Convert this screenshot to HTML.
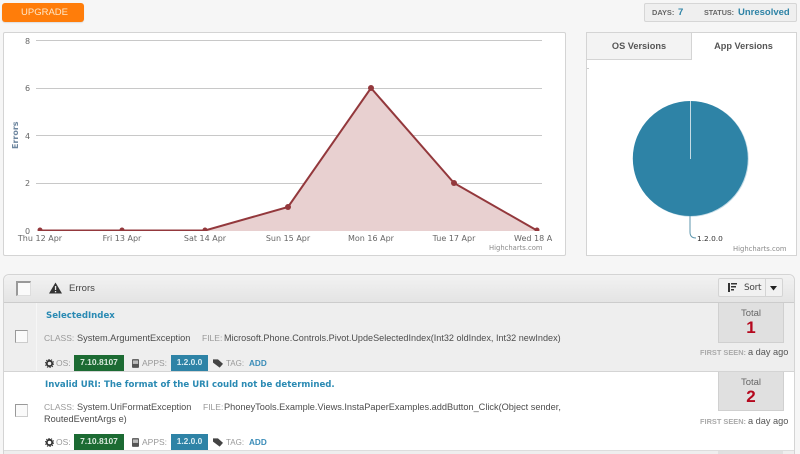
<!DOCTYPE html>
<html>
<head>
<meta charset="utf-8">
<style>
html,body{margin:0;padding:0;width:800px;height:454px;overflow:hidden}
#w{position:absolute;left:0;top:0;width:800px;height:454px;overflow:hidden;background:#f6f6f6;font-family:"Liberation Sans",sans-serif}
.a{position:absolute}
.t{position:absolute;white-space:nowrap}
.upg{left:2px;top:3px;width:82px;height:19px;background:#ff7d0a;border-radius:3px;color:#fde6c8;font:9.5px/19px "Liberation Sans",sans-serif;text-indent:19px;box-shadow:0 1px 1px #ddd}
.stat{left:644px;top:3px;width:151px;height:17px;background:#efefef;border:1px solid #d6d6d6;border-radius:2px}
.chart{left:3px;top:32px;width:561px;height:222px;background:#fff;border:1px solid #d4d4d4;border-radius:2px}
.pie{left:586px;top:32px;width:209px;height:222px;background:#fff;border:1px solid #d4d4d4}
.tab1{left:586px;top:32px;width:104px;height:26px;background:#f3f3f3;border:1px solid #d4d4d4;color:#555;font:bold 9.2px/26px "Liberation Sans",sans-serif;text-align:center}
.tab2{left:692px;top:33px;width:103px;height:26px;color:#555;font:bold 9.2px/26px "Liberation Sans",sans-serif;text-align:center}
.panel{left:3px;top:274px;width:790px;height:178px;background:#fff;border:1px solid #d4d4d4;border-radius:6px 6px 0 0}
.head{left:4px;top:275px;width:790px;height:27px;background:linear-gradient(#f2f2f2,#e4e4e4);border-bottom:1px solid #ccc;border-radius:6px 6px 0 0}
.row1{left:4px;top:303px;width:790px;height:68px;background:#eeeeee;border-bottom:1px solid #d4d4d4}
.row3{left:4px;top:450px;width:790px;height:4px;background:#eee;border-top:1px solid #ddd}
.cb{position:absolute;width:11px;height:11px;background:#fafafa;border:1px solid #999;border-right-color:#ccc;border-bottom-color:#ccc}
.lbl{color:#999;font-size:8.5px;line-height:13px}
.val{color:#4d4d4d;font-size:9.2px;line-height:13px}
.os{position:absolute;left:74px;width:50px;height:16px;background:#1c6b33;color:#d8e8dc;font:bold 8.5px/15px "Liberation Sans",sans-serif;text-align:center}
.app{position:absolute;left:171px;width:37px;height:16px;background:#2e83a6;color:#d8ebf2;font:bold 8.4px/15px "Liberation Sans",sans-serif;text-align:center}
.title{color:#2a8ab3;font:bold 8.6px/12px "DejaVu Sans",sans-serif}
.add{color:#3a8cb8;font:bold 8.2px/13px "Liberation Sans",sans-serif}
.total{position:absolute;left:718px;width:64px;background:#e0e0e0;border:1px solid #d0d0d0;border-top:none;text-align:center;color:#666;font-size:9.5px;line-height:12px}
.total b{display:block;color:#b5081e;font-size:17px;line-height:15px}
.fs{color:#aaa;font:bold 7.4px/13px "Liberation Sans",sans-serif}
.ago{color:#555;font-size:9.2px;line-height:13px}
</style>
</head>
<body>
<div id="w">
<div class="a upg">UPGRADE</div>
<div class="a stat"></div>
<div class="t" style="left:652px;top:6px;font:bold 7.4px/13px 'Liberation Sans',sans-serif;color:#666">DAYS:</div>
<div class="t" style="left:678px;top:6px;font:bold 9.5px/13px 'Liberation Sans',sans-serif;color:#2e83a6">7</div>
<div class="t" style="left:704px;top:6px;font:bold 7.2px/13px 'Liberation Sans',sans-serif;color:#666">STATUS:</div>
<div class="t" style="left:738px;top:6px;font:bold 9.5px/13px 'Liberation Sans',sans-serif;color:#2e83a6">Unresolved</div>

<div class="a chart"></div>
<svg class="a" style="left:0;top:0" width="570" height="260" viewBox="0 0 570 260">
<defs><clipPath id="c"><rect x="0" y="0" width="570" height="231"/></clipPath></defs>
<g stroke="#c8c8c8" stroke-width="1">
<line x1="36" y1="40.5" x2="542" y2="40.5"/>
<line x1="36" y1="88.5" x2="542" y2="88.5"/>
<line x1="36" y1="135.5" x2="542" y2="135.5"/>
<line x1="36" y1="183.5" x2="542" y2="183.5"/>
</g>
<g clip-path="url(#c)">
<polygon points="40,231 122,231 205,231 288,207 371,88 454,183 537,231" fill="#e8d0d0"/>
<polyline points="40,230.5 122,230.5 205,230.5 288,207 371,88 454,183 537,230.500" fill="none" stroke="#93383c" stroke-width="2"/>
<g fill="#93383c">
<circle cx="40" cy="230" r="2.5"/><circle cx="122" cy="230" r="2.5"/><circle cx="205" cy="230" r="2.5"/>
<circle cx="288" cy="207" r="3"/><circle cx="371" cy="88" r="3"/><circle cx="454" cy="183" r="3"/><circle cx="537" cy="230" r="2.5"/>
</g>
</g>
<g font-family="DejaVu Sans,sans-serif" font-size="8" fill="#666">
<text x="25" y="44">8</text><text x="25" y="91">6</text><text x="25" y="139">4</text><text x="25" y="186">2</text><text x="25" y="234">0</text>
<text x="40" y="241" text-anchor="middle">Thu 12 Apr</text>
<text x="122" y="241" text-anchor="middle">Fri 13 Apr</text>
<text x="205" y="241" text-anchor="middle">Sat 14 Apr</text>
<text x="288" y="241" text-anchor="middle">Sun 15 Apr</text>
<text x="371" y="241" text-anchor="middle">Mon 16 Apr</text>
<text x="454" y="241" text-anchor="middle">Tue 17 Apr</text>
<text x="514" y="241">Wed 18 A</text>
</g>
<text x="489" y="250" font-family="DejaVu Sans,sans-serif" font-size="6.8" fill="#8a8a8a">Highcharts.com</text>
<text transform="translate(18,149) rotate(-90)" font-family="DejaVu Sans,sans-serif" font-size="8" font-weight="bold" fill="#6d869f">Errors</text>
</svg>

<div class="a pie"></div>
<div class="a tab1">OS Versions</div>
<div class="a tab2">App Versions</div>
<svg class="a" style="left:586px;top:60px" width="214" height="200" viewBox="586 60 214 200">
<rect x="587" y="68" width="2" height="1" fill="#ccc"/>
<circle cx="691" cy="159" r="57.700" fill="#c3dbe6"/>
<circle cx="690.300" cy="158.500" r="57.500" fill="#2e83a6"/>
<line x1="690.500" y1="101" x2="690.500" y2="159" stroke="#c5dbe4" stroke-width="1"/>
<path d="M690 216V232Q690 238 696 238" fill="none" stroke="#5d96ad" stroke-width="1"/>
<text x="697" y="241" font-family="DejaVu Sans,sans-serif" font-size="7.400" fill="#333">1.2.0.0</text>
<text x="733" y="251" font-family="DejaVu Sans,sans-serif" font-size="6.800" fill="#8a8a8a">Highcharts.com</text>
</svg>

<div class="a panel"></div>
<div class="a head"></div>
<div class="a" style="left:16px;top:281px;width:12px;height:12px;background:#fafafa;border-top:2px solid #999;border-left:2px solid #999;border-right:1px solid #ddd;border-bottom:1px solid #ddd"></div>
<svg class="a" style="left:49px;top:282px" width="14" height="12" viewBox="0 0 14 12"><path d="M6.500 0.500L13 11.500H0Z" fill="#333"/><rect x="5.900" y="4" width="1.300" height="4" fill="#eee"/><rect x="5.900" y="9" width="1.300" height="1.300" fill="#eee"/></svg>
<div class="t" style="left:69px;top:282px;font:9.500px/13px 'Liberation Sans',sans-serif;color:#444">Errors</div>
<div class="a" style="left:718px;top:278px;width:63px;height:17px;background:#f1f1f1;border:1px solid #d4d4d4;border-radius:2px"></div>
<div class="a" style="left:765px;top:279px;width:1px;height:17px;background:#d4d4d4"></div>
<svg class="a" style="left:728px;top:283px" width="10" height="9" viewBox="0 0 10 9"><path d="M0 0h2v9H0zM3 0h6v1.500H3zM3 3h5v1.500H3zM3 6h3v1.500H3z" fill="#333"/></svg>
<div class="t" style="left:744px;top:282px;font:9px/13px 'DejaVu Sans',sans-serif;color:#444;letter-spacing:-.3px">Sort</div>
<svg class="a" style="left:770px;top:286px" width="8" height="5"><path d="M0 0H7L3.500 4.500Z" fill="#222"/></svg>

<div class="a row1"></div>
<div class="a" style="left:36px;top:303px;width:1px;height:68px;background:#f6f6f6"></div>
<div class="a row3"></div>
<div class="a" style="left:718px;top:451px;width:65px;height:3px;background:#e0e0e0"></div>

<div class="cb" style="left:15px;top:330px"></div>
<div class="t title" style="left:46px;top:310px">SelectedIndex</div>
<div class="t lbl" style="left:44px;top:332px">CLASS:</div>
<div class="t val" style="left:77px;top:332px">System.ArgumentException</div>
<div class="t lbl" style="left:202px;top:332px">FILE:</div>
<div class="t val" style="left:224px;top:332px;font-size:9.100px">Microsoft.Phone.Controls.Pivot.UpdeSelectedIndex(Int32 oldIndex, Int32 newIndex)</div>
<div class="os" style="top:355px">7.10.8107</div>
<div class="app" style="top:355px">1.2.0.0</div>
<svg class="a" style="left:45px;top:359px" width="9" height="9" viewBox="0 0 10 10"><circle cx="5" cy="5" r="3" fill="none" stroke="#333" stroke-width="2"/><circle cx="5" cy="5" r="4.600" fill="none" stroke="#333" stroke-width="1" stroke-dasharray="1.500 1.400"/></svg>
<div class="t lbl" style="left:56px;top:357px">OS:</div>
<svg class="a" style="left:132px;top:359px" width="7" height="9" viewBox="0 0 8 10"><path d="M1 0h6a1 1 0 0 1 1 1v8a1 1 0 0 1-1 1H1a1 1 0 0 1-1-1V1a1 1 0 0 1 1-1z" fill="#555"/><rect x="1" y="1.500" width="6" height="4" fill="#bbb"/></svg>
<div class="t lbl" style="left:142px;top:357px">APPS:</div>
<svg class="a" style="left:213px;top:359px" width="10" height="9" viewBox="0 0 12 10"><path d="M0 0H6L12 5.500L8 10L0 4Z" fill="#444"/></svg>
<div class="t lbl" style="left:226px;top:357px;font-size:8px">TAG:</div>
<div class="t add" style="left:249px;top:357px">ADD</div>
<div class="total" style="top:303px;height:39px"><div style="padding-top:5px">Total</div><b>1</b></div>
<div class="t fs" style="left:700px;top:346px">FIRST SEEN:</div>
<div class="t ago" style="left:748px;top:346px">a day ago</div>

<div class="cb" style="left:15px;top:404px"></div>
<div class="t title" style="left:45px;top:379px">Invalid URI: The format of the URI could not be determined.</div>
<div class="t lbl" style="left:44px;top:401px">CLASS:</div>
<div class="t val" style="left:77px;top:401px">System.UriFormatException</div>
<div class="t lbl" style="left:203px;top:401px">FILE:</div>
<div class="t val" style="left:224px;top:401px">PhoneyTools.Example.Views.InstaPaperExamples.addButton_Click(Object sender,</div>
<div class="t val" style="left:44px;top:413px">RoutedEventArgs e)</div>
<div class="os" style="top:434px">7.10.8107</div>
<div class="app" style="top:434px">1.2.0.0</div>
<svg class="a" style="left:45px;top:438px" width="9" height="9" viewBox="0 0 10 10"><circle cx="5" cy="5" r="3" fill="none" stroke="#333" stroke-width="2"/><circle cx="5" cy="5" r="4.600" fill="none" stroke="#333" stroke-width="1" stroke-dasharray="1.500 1.400"/></svg>
<div class="t lbl" style="left:56px;top:436px">OS:</div>
<svg class="a" style="left:132px;top:438px" width="7" height="9" viewBox="0 0 8 10"><path d="M1 0h6a1 1 0 0 1 1 1v8a1 1 0 0 1-1 1H1a1 1 0 0 1-1-1V1a1 1 0 0 1 1-1z" fill="#555"/><rect x="1" y="1.500" width="6" height="4" fill="#bbb"/></svg>
<div class="t lbl" style="left:142px;top:436px">APPS:</div>
<svg class="a" style="left:213px;top:438px" width="10" height="9" viewBox="0 0 12 10"><path d="M0 0H6L12 5.500L8 10L0 4Z" fill="#444"/></svg>
<div class="t lbl" style="left:226px;top:436px;font-size:8px">TAG:</div>
<div class="t add" style="left:249px;top:436px">ADD</div>
<div class="total" style="top:372px;height:38px"><div style="padding-top:5px">Total</div><b>2</b></div>
<div class="t fs" style="left:700px;top:415px">FIRST SEEN:</div>
<div class="t ago" style="left:748px;top:415px">a day ago</div>
</div>
</body>
</html>
